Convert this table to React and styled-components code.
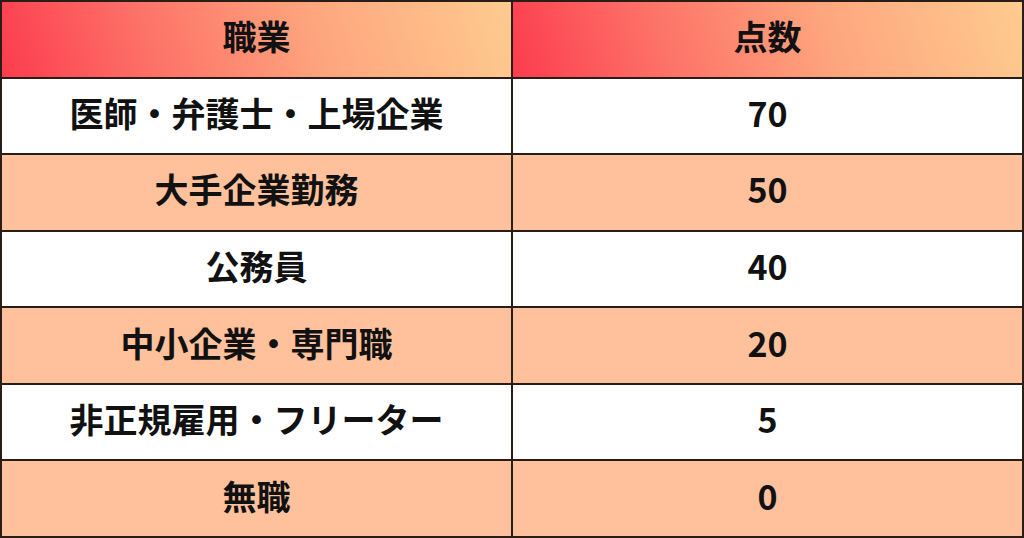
import React from "react";
import styled, { createGlobalStyle } from "styled-components";

const Global = createGlobalStyle`
  html, body { margin: 0; padding: 0; background: #ffffff; }
  body { font-family: "Noto Sans CJK JP", "Noto Sans", sans-serif; }
`;

const Table = styled.div`
  width: 1024px;
  height: 538px;
  box-sizing: border-box;
  display: grid;
  grid-template-columns: 1fr 1fr;
  grid-template-rows: repeat(7, 1fr);
  gap: 2px;
  padding: 2px;
  background: #2a1c17;
`;

const Cell = styled.div`
  display: flex;
  align-items: center;
  justify-content: center;
  padding-bottom: 6px;
  box-sizing: border-box;
  font-family: "Noto Sans CJK JP", "Noto Sans", sans-serif;
  font-weight: 700;
  font-size: 34px;
  line-height: 1;
  color: #111;
  background: ${(p) =>
    p.$head
      ? "linear-gradient(72deg, #fc3c4e 0%, #fd7368 30%, #fea67e 62%, #fecb90 100%)"
      : p.$alt
      ? "#fec19c"
      : "#ffffff"};
`;

const rows = [
  ["医師・弁護士・上場企業", "70"],
  ["大手企業勤務", "50"],
  ["公務員", "40"],
  ["中小企業・専門職", "20"],
  ["非正規雇用・フリーター", "5"],
  ["無職", "0"],
];

export default function App() {
  return (
    <>
      <Global />
      <Table>
        <Cell $head>職業</Cell>
        <Cell $head>点数</Cell>
        {rows.map(([job, score], i) => (
          <React.Fragment key={job}>
            <Cell $alt={i % 2 === 1}>{job}</Cell>
            <Cell $alt={i % 2 === 1}>{score}</Cell>
          </React.Fragment>
        ))}
      </Table>
    </>
  );
}
